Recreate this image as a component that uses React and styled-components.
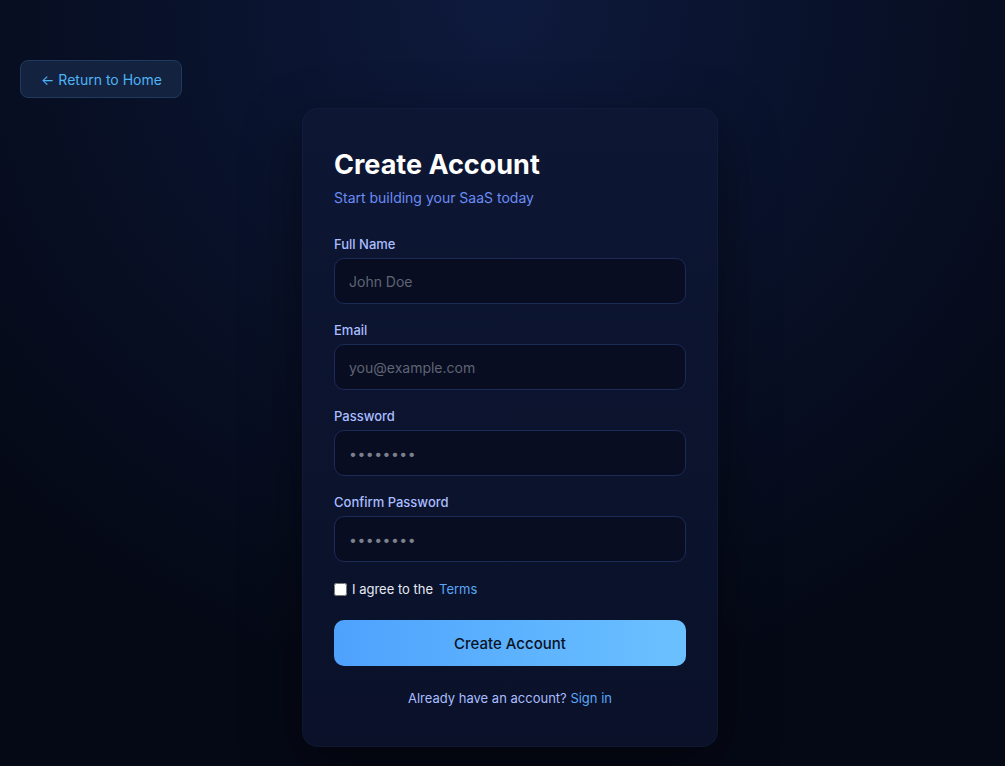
import styled, { createGlobalStyle } from 'styled-components';

const GlobalStyle = createGlobalStyle`
  html, body {
    margin: 0;
    padding: 0;
    background: #050916;
  }
  * {
    box-sizing: border-box;
  }
`;

const Page = styled.main`
  min-height: 100vh;
  padding: 60px 5px 20px 20px;
  font-family: Inter, 'Noto Sans', sans-serif;
  background: radial-gradient(
    ellipse 70% 90% at 50% 0%,
    #0e1a3d 0%,
    #09122b 45%,
    #050916 100%
  );
`;

const BackButton = styled.a`
  display: inline-flex;
  align-items: center;
  gap: 4px;
  height: 38px;
  padding: 0 19px 0 20px;
  border-radius: 8px;
  border: 1px solid #1f3a5c;
  background: #12223f;
  color: #4fb3f6;
  font-size: 14px;
  text-decoration: none;
  cursor: pointer;
`;

const Center = styled.div`
  display: flex;
  justify-content: center;
  margin-top: 10px;
`;

const Card = styled.section`
  width: 416px;
  padding: 40px 32px 39px;
  border-radius: 16px;
  background: linear-gradient(180deg, #0d1633 0%, #0a1129 100%);
  box-shadow: inset 0 0 0 1px rgba(120, 140, 220, 0.05),
    0 20px 60px rgba(0, 0, 0, 0.45);
`;

const Title = styled.h1`
  margin: 0;
  font-size: 27px;
  line-height: 34px;
  font-weight: 700;
  color: #ffffff;
`;

const Subtitle = styled.p`
  margin: 6px 0 0;
  font-size: 14px;
  line-height: 20px;
  color: #6b8cf5;
`;

const Form = styled.form`
  display: flex;
  flex-direction: column;
  gap: 16px;
  margin-top: 26px;
`;

const Field = styled.label`
  display: flex;
  flex-direction: column;
  gap: 4px;
`;

const LabelText = styled.span`
  font-size: 13px;
  line-height: 20px;
  font-weight: 500;
  color: #a9bdff;
`;

const Input = styled.input`
  height: 46px;
  width: 100%;
  padding: 0 14px;
  border-radius: 10px;
  border: 1px solid #1c2a58;
  background: #080d22;
  color: #e2e8f0;
  font-family: inherit;
  font-size: 14px;
  outline: none;

  &::placeholder {
    color: ${(props) => (props.$dots ? '#7c808c' : '#5f6472')};
    letter-spacing: ${(props) => (props.$dots ? '0.5px' : 'normal')};
  }
`;

const AgreeRow = styled.div`
  display: flex;
  align-items: center;
  height: 22px;
  font-size: 13px;
  color: #e5e9f5;
`;

const Checkbox = styled.input`
  width: 13px;
  height: 13px;
  margin: 0 5px 0 0;
`;

const LinkText = styled.a`
  color: #5aa7f8;
  text-decoration: none;
  margin-left: ${(props) => props.$gap || 0}px;
  cursor: pointer;
`;

const SubmitButton = styled.button`
  height: 46px;
  margin-top: 4px;
  border: none;
  border-radius: 10px;
  background: linear-gradient(90deg, #4ea2fd 0%, #6bc1ff 100%);
  color: #0b1224;
  font-family: inherit;
  font-size: 15px;
  font-weight: 500;
  cursor: pointer;
`;

const Footer = styled.p`
  margin: 22px 0 0;
  text-align: center;
  font-size: 13px;
  line-height: 20px;
  color: #a9bdff;
`;

const fields = [
  { label: 'Full Name', placeholder: 'John Doe', type: 'text' },
  { label: 'Email', placeholder: 'you@example.com', type: 'email' },
  { label: 'Password', placeholder: '••••••••', type: 'password', dots: true },
  { label: 'Confirm Password', placeholder: '••••••••', type: 'password', dots: true },
];

export default function App() {
  return (
    <>
      <GlobalStyle />
      <Page>
        <BackButton>
          <span>←</span>
          <span>Return to Home</span>
        </BackButton>
        <Center>
          <Card>
            <Title>Create Account</Title>
            <Subtitle>Start building your SaaS today</Subtitle>
            <Form onSubmit={(e) => e.preventDefault()}>
              {fields.map((f) => (
                <Field key={f.label}>
                  <LabelText>{f.label}</LabelText>
                  <Input type={f.type} placeholder={f.placeholder} $dots={f.dots} />
                </Field>
              ))}
              <AgreeRow>
                <Checkbox type="checkbox" />
                <span>I agree to the</span>
                <LinkText $gap={6}>Terms</LinkText>
              </AgreeRow>
              <SubmitButton type="submit">Create Account</SubmitButton>
            </Form>
            <Footer>
              Already have an account? <LinkText>Sign in</LinkText>
            </Footer>
          </Card>
        </Center>
      </Page>
    </>
  );
}
